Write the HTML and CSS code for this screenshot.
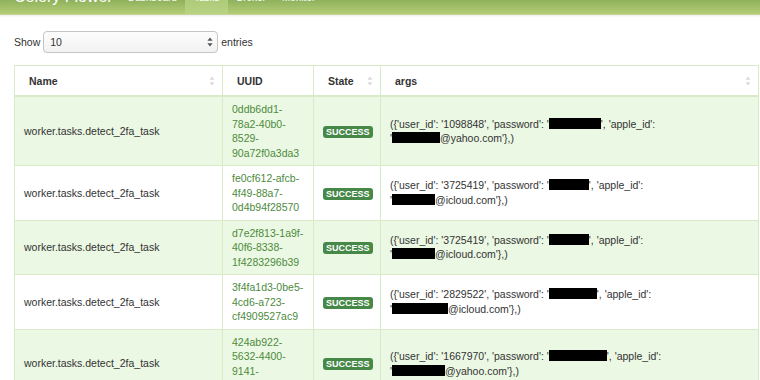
FILE: index.html
```html
<!DOCTYPE html>
<html>
<head>
<meta charset="utf-8">
<link rel="stylesheet" href="styles.css">
</head>
<body>
<div class="navbar">
  <span class="brand">Celery Flower</span>
  <ul class="nav">
    <li><a>Dashboard</a></li>
    <li class="active"><a>Tasks</a></li>
    <li><a>Broker</a></li>
    <li><a>Monitor</a></li>
  </ul>
</div>
<div class="container">
  <div class="length">
    <span>Show</span>
    <div class="select"><span>10</span>
      <svg width="6" height="10" viewBox="0 0 6 10"><path d="M3 0.5 L5.6 3.8 H0.4 Z M3 9.5 L5.6 6.2 H0.4 Z" fill="#555"/></svg>
    </div>
    <span>entries</span>
  </div>
  <table class="tasks">
    <colgroup>
      <col class="c-name"><col class="c-uuid"><col class="c-state"><col class="c-args">
    </colgroup>
    <thead>
      <tr>
        <th><div class="th-in">Name<svg class="sort" width="6" height="10" viewBox="0 0 6 10"><path d="M3 0.5 L5.6 3.8 H0.4 Z M3 9.5 L5.6 6.2 H0.4 Z" fill="#dadada"/></svg></div></th>
        <th><div class="th-in">UUID</div></th>
        <th><div class="th-in">State<svg class="sort" width="6" height="10" viewBox="0 0 6 10"><path d="M3 0.5 L5.6 3.8 H0.4 Z M3 9.5 L5.6 6.2 H0.4 Z" fill="#dadada"/></svg></div></th>
        <th><div class="th-in">args<svg class="sort" width="6" height="10" viewBox="0 0 6 10"><path d="M3 0.5 L5.6 3.8 H0.4 Z M3 9.5 L5.6 6.2 H0.4 Z" fill="#dadada"/></svg></div></th>
      </tr>
    </thead>
    <tbody>
      <tr class="odd">
        <td>worker.tasks.detect_2fa_task</td>
        <td class="uuid">0ddb6dd1-78a2-40b0-8529-90a72f0a3da3</td>
        <td><span class="label">SUCCESS</span></td>
        <td>({'user_id': '1098848', 'password': '<span class="redact" style="width:52px"></span>', 'apple_id': <span class="nw">'<span class="redact" style="width:48px"></span>@yahoo.com'},)</span></td>
      </tr>
      <tr>
        <td>worker.tasks.detect_2fa_task</td>
        <td class="uuid">fe0cf612-afcb-4f49-88a7-0d4b94f28570</td>
        <td><span class="label">SUCCESS</span></td>
        <td>({'user_id': '3725419', 'password': '<span class="redact" style="width:40px"></span>', 'apple_id': <span class="nw">'<span class="redact" style="width:43px"></span>@icloud.com'},)</span></td>
      </tr>
      <tr class="odd">
        <td>worker.tasks.detect_2fa_task</td>
        <td class="uuid">d7e2f813-1a9f-40f6-8338-1f4283296b39</td>
        <td><span class="label">SUCCESS</span></td>
        <td>({'user_id': '3725419', 'password': '<span class="redact" style="width:40px"></span>', 'apple_id': <span class="nw">'<span class="redact" style="width:43px"></span>@icloud.com'},)</span></td>
      </tr>
      <tr>
        <td>worker.tasks.detect_2fa_task</td>
        <td class="uuid">3f4fa1d3-0be5-4cd6-a723-cf4909527ac9</td>
        <td><span class="label">SUCCESS</span></td>
        <td>({'user_id': '2829522', 'password': '<span class="redact" style="width:48px"></span>', 'apple_id': <span class="nw">'<span class="redact" style="width:56px"></span>@icloud.com'},)</span></td>
      </tr>
      <tr class="odd">
        <td>worker.tasks.detect_2fa_task</td>
        <td class="uuid">424ab922-5632-4400-9141-d892d93ad3d8</td>
        <td><span class="label">SUCCESS</span></td>
        <td>({'user_id': '1667970', 'password': '<span class="redact" style="width:58px"></span>', 'apple_id': <span class="nw">'<span class="redact" style="width:53px"></span>@yahoo.com'},)</span></td>
      </tr>
    </tbody>
  </table>
</div>
</body>
</html>
```
FILE: styles.css
```css
html, body {
  margin: 0;
  padding: 0;
  background: #fff;
  font-family: "Liberation Sans", Arial, sans-serif;
  color: #333;
  font-size: 10.5px;
}
.navbar {
  margin-top: -25px;
  height: 39px;
  display: flex;
  align-items: stretch;
  padding: 0 0 0 14px;
  background: linear-gradient(#6f9445, #86aa56 55%, #b4cd76);
  border-bottom: 1px solid #c3d69a;
  box-shadow: 0 1px 2px rgba(0,0,0,0.08);
}
.brand {
  color: #fff;
  font-size: 16px;
  line-height: 39px;
  width: 106px;
  white-space: nowrap;
  padding-top: 2px;
}
.nav {
  list-style: none;
  margin: 0;
  padding: 0;
  display: flex;
}
.nav li {
  display: flex;
  align-items: center;
  padding: 6px 8px 0;
  white-space: nowrap;
}
.nav li a {
  color: #fff;
  font-size: 10px;
}
.nav li.active {
  background: linear-gradient(#9cbe68, #b8d283);
  padding: 6px 9px 0;
}
.container {
  padding: 0 2px 0 14px;
}
.length {
  display: flex;
  align-items: center;
  gap: 3px;
  margin-top: 16px;
  height: 22px;
}
.select {
  width: 163px;
  height: 20px;
  border: 1px solid #c4c4c4;
  border-radius: 4px;
  background: linear-gradient(#fdfdfd, #f2f2f2);
  display: flex;
  align-items: center;
  justify-content: space-between;
  padding: 0 4px 0 6px;
}
.select span { color: #333; }
.tasks {
  margin-top: 12px;
  width: 744px;
  table-layout: fixed;
  border-collapse: collapse;
  border: 1px solid #d7ebc9;
}
.c-name { width: 208px; }
.c-uuid { width: 91px; }
.c-state { width: 67px; }
.c-args { width: 378px; }
.tasks th {
  height: 29px;
  padding: 0 7px 0 14px;
  text-align: left;
  font-weight: bold;
  border: 1px solid #d7ebc9;
  border-bottom: 2px solid #d7ebc9;
  background: #fff;
}
.th-in {
  display: flex;
  align-items: center;
  justify-content: space-between;
}
.tasks td {
  padding: 5px 9px;
  line-height: 14.5px;
  border: 1px solid #d7ebc9;
  vertical-align: middle;
}
.tasks tr.odd td {
  background: #ebf8e3;
}
.uuid {
  color: #4d8b3d;
  word-wrap: break-word;
}
.nw { white-space: nowrap; }
.label {
  display: inline-block;
  background: #468847;
  color: #fff;
  font-weight: bold;
  font-size: 9px;
  line-height: 12px;
  padding: 0 3px;
  border-radius: 3px;
}
.redact {
  display: inline-block;
  height: 11px;
  background: #000;
  vertical-align: -1px;
}
```
